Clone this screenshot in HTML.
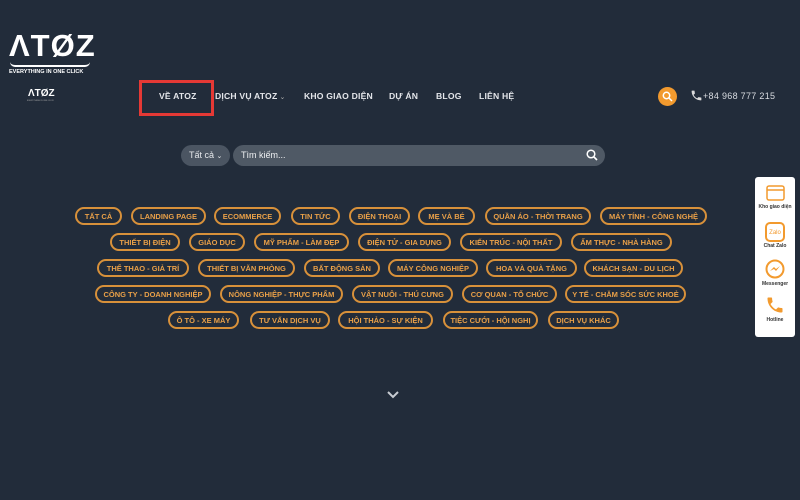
<!DOCTYPE html>
<html><head><meta charset="utf-8"><style>
*{margin:0;padding:0;box-sizing:border-box}
body{width:800px;height:500px;background:#222c3a;font-family:"Liberation Sans","DejaVu Sans",sans-serif;position:relative;overflow:hidden;color:#fff}
.abs{position:absolute}
.nav{position:absolute;top:91px;font-size:8.6px;font-weight:bold;color:#e4e6ea;letter-spacing:.2px}
.tag{position:absolute;height:18px;border:2px solid #d8913a;border-radius:10px;color:#e9a048;font-size:7.5px;font-weight:bold;display:flex;align-items:center;justify-content:center;white-space:nowrap}
.side{position:absolute;left:755px;top:177px;width:40px;height:160px;background:#fff;border-radius:3px}
.side div{position:absolute;left:0;width:40px;text-align:center;font-size:5px;color:#333;font-weight:bold}
</style></head><body>
<div class="abs" style="left:9px;top:28px;font-size:31px;font-weight:bold;letter-spacing:1px;color:#fff">ΛTØZ</div>
<div class="abs" style="left:10px;top:62px;width:80px;height:5px;border-bottom:2px solid #fff;border-radius:0 0 40px 40px"></div>
<div class="abs" style="left:9px;top:69px;font-size:5.5px;font-weight:bold">EVERYTHING IN ONE CLICK</div>
<div class="abs" style="left:28px;top:88px;font-size:10px;font-weight:bold">ΛTØZ</div>
<div class="abs" style="left:27px;top:100px;font-size:2px;color:#aaa">EVERYTHING IN ONE CLICK</div>
<div class="abs" style="left:139px;top:80px;width:75px;height:36px;border:3px solid #e53935"></div>
<div class="nav" style="left:159px">VỀ ATOZ</div>
<div class="nav" style="left:215px">DỊCH VỤ ATOZ<span style="font-weight:normal;font-size:7px;color:#aaa"> ⌄</span></div>
<div class="nav" style="left:304px">KHO GIAO DIỆN</div>
<div class="nav" style="left:389px">DỰ ÁN</div>
<div class="nav" style="left:436px">BLOG</div>
<div class="nav" style="left:479px">LIÊN HỆ</div>
<div class="abs" style="left:658px;top:87px;width:19px;height:19px;border-radius:50%;background:#f29a2e"></div>
<svg class="abs" style="left:662px;top:91px" width="11" height="11" viewBox="0 0 11 11"><circle cx="4.5" cy="4.5" r="3.2" stroke="#fff" stroke-width="1.5" fill="none"/><path d="M7 7L10 10" stroke="#fff" stroke-width="1.5"/></svg>
<svg class="abs" style="left:690px;top:89px" width="13" height="13" viewBox="0 0 24 24"><path fill="#ddd" d="M6.6 10.8c1.4 2.8 3.8 5.1 6.6 6.6l2.2-2.2c.3-.3.7-.4 1-.2 1.1.4 2.3.6 3.6.6.6 0 1 .4 1 1V20c0 .6-.4 1-1 1C10.6 21 3 13.4 3 4c0-.6.4-1 1-1h3.5c.6 0 1 .4 1 1 0 1.3.2 2.5.6 3.6.1.3 0 .7-.2 1L6.6 10.8z"/></svg>
<div class="abs" style="left:703px;top:91px;font-size:9px;color:#d8dbe0;letter-spacing:.3px">+84 968 777 215</div>
<div class="abs" style="left:181px;top:145px;width:49px;height:21px;border-radius:11px;background:#4b5562;font-size:9px;color:#e6e8eb;padding:5px 0 0 8px">Tất cả <span style="font-size:7px">⌄</span></div>
<div class="abs" style="left:233px;top:145px;width:372px;height:21px;border-radius:11px;background:#4f5965;font-size:9px;color:#eef0f2;padding:5px 0 0 8px">Tìm kiếm...</div>
<svg class="abs" style="left:586px;top:149px" width="12" height="12" viewBox="0 0 12 12"><circle cx="5" cy="5" r="3.8" stroke="#fff" stroke-width="1.5" fill="none"/><path d="M8 8L11 11" stroke="#fff" stroke-width="1.6"/></svg>

<div class="tag" style="left:75px;top:207px;width:47px">TẤT CẢ</div>
<div class="tag" style="left:131px;top:207px;width:75px">LANDING PAGE</div>
<div class="tag" style="left:214px;top:207px;width:67px">ECOMMERCE</div>
<div class="tag" style="left:291px;top:207px;width:49px">TIN TỨC</div>
<div class="tag" style="left:349px;top:207px;width:61px">ĐIỆN THOẠI</div>
<div class="tag" style="left:418px;top:207px;width:57px">MẸ VÀ BÉ</div>
<div class="tag" style="left:485px;top:207px;width:106px">QUẦN ÁO - THỜI TRANG</div>
<div class="tag" style="left:600px;top:207px;width:107px">MÁY TÍNH - CÔNG NGHỆ</div>

<div class="tag" style="left:110px;top:233px;width:70px">THIẾT BỊ ĐIỆN</div>
<div class="tag" style="left:189px;top:233px;width:56px">GIÁO DỤC</div>
<div class="tag" style="left:254px;top:233px;width:95px">MỸ PHẨM - LÀM ĐẸP</div>
<div class="tag" style="left:358px;top:233px;width:93px">ĐIỆN TỬ - GIA DỤNG</div>
<div class="tag" style="left:460px;top:233px;width:102px">KIẾN TRÚC - NỘI THẤT</div>
<div class="tag" style="left:571px;top:233px;width:101px">ẨM THỰC - NHÀ HÀNG</div>

<div class="tag" style="left:97px;top:259px;width:92px">THỂ THAO - GIẢ TRÍ</div>
<div class="tag" style="left:198px;top:259px;width:97px">THIẾT BỊ VĂN PHÒNG</div>
<div class="tag" style="left:304px;top:259px;width:76px">BẤT ĐỘNG SẢN</div>
<div class="tag" style="left:388px;top:259px;width:90px">MÁY CÔNG NGHIỆP</div>
<div class="tag" style="left:486px;top:259px;width:91px">HOA VÀ QUÀ TẶNG</div>
<div class="tag" style="left:584px;top:259px;width:99px">KHÁCH SẠN - DU LỊCH</div>

<div class="tag" style="left:95px;top:285px;width:116px">CÔNG TY - DOANH NGHIỆP</div>
<div class="tag" style="left:220px;top:285px;width:123px">NÔNG NGHIỆP - THỰC PHẨM</div>
<div class="tag" style="left:352px;top:285px;width:101px">VẬT NUÔI - THÚ CƯNG</div>
<div class="tag" style="left:462px;top:285px;width:95px">CƠ QUAN - TỔ CHỨC</div>
<div class="tag" style="left:565px;top:285px;width:121px">Y TẾ - CHĂM SÓC SỨC KHOẺ</div>

<div class="tag" style="left:168px;top:311px;width:71px">Ô TÔ - XE MÁY</div>
<div class="tag" style="left:250px;top:311px;width:80px">TƯ VẤN DỊCH VỤ</div>
<div class="tag" style="left:338px;top:311px;width:95px">HỘI THẢO - SỰ KIỆN</div>
<div class="tag" style="left:443px;top:311px;width:95px">TIỆC CƯỚI - HỘI NGHỊ</div>
<div class="tag" style="left:548px;top:311px;width:71px">DỊCH VỤ KHÁC</div>

<svg class="abs" style="left:386px;top:390px" width="14" height="9" viewBox="0 0 14 9"><path d="M2 2L7 7L12 2" stroke="#c8ccd2" stroke-width="2" fill="none"/></svg>

<div class="side">
<svg style="position:absolute;left:11px;top:7px" width="19" height="17" viewBox="0 0 19 17"><rect x="1" y="2" width="17" height="14" rx="2" fill="none" stroke="#f29a2e" stroke-width="1.5"/><path d="M1 6h17" stroke="#f29a2e" stroke-width="1.5"/></svg>
<div style="top:27px">Kho giao diện</div>
<svg style="position:absolute;left:10px;top:45px" width="20" height="20" viewBox="0 0 20 20"><rect x="1" y="1" width="18" height="18" rx="4" fill="none" stroke="#f29a2e" stroke-width="2"/><text x="10" y="12" font-size="6" fill="#f29a2e" text-anchor="middle" font-family="Liberation Sans">Zalo</text></svg>
<div style="top:66px">Chat Zalo</div>
<svg style="position:absolute;left:10px;top:82px" width="20" height="20" viewBox="0 0 20 20"><circle cx="10" cy="10" r="8.5" fill="none" stroke="#f29a2e" stroke-width="2"/><path d="M5 12l4-4 2 2 4-3-4 5-2-2z" fill="#f29a2e"/></svg>
<div style="top:104px">Messenger</div>
<svg style="position:absolute;left:10px;top:118px" width="20" height="20" viewBox="0 0 24 24"><path fill="#f29a2e" d="M6.6 10.8c1.4 2.8 3.8 5.1 6.6 6.6l2.2-2.2c.3-.3.7-.4 1-.2 1.1.4 2.3.6 3.6.6.6 0 1 .4 1 1V20c0 .6-.4 1-1 1C10.6 21 3 13.4 3 4c0-.6.4-1 1-1h3.5c.6 0 1 .4 1 1 0 1.3.2 2.5.6 3.6.1.3 0 .7-.2 1L6.6 10.8z"/></svg>
<div style="top:140px">Hotline</div>
</div>
</body></html>
